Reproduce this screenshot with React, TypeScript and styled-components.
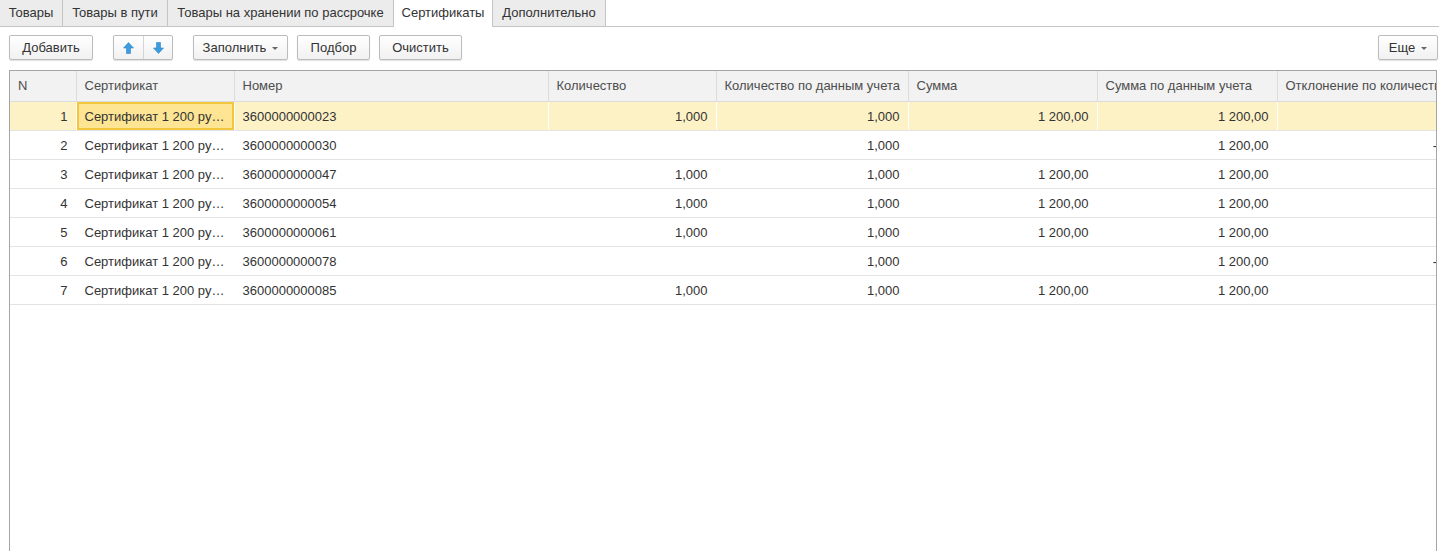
import React from "react";
import styled, { createGlobalStyle } from "styled-components";

const Global = createGlobalStyle`
  html, body { margin: 0; padding: 0; background: #fff; }
  body { font-family: "Liberation Sans", Arial, sans-serif; font-size: 13px; color: #333; overflow: hidden; }
  * { box-sizing: border-box; }
`;

const Page = styled.div`
  width: 1439px;
  height: 551px;
  display: flex;
  flex-direction: column;
  overflow: hidden;
`;

const TabBar = styled.div`
  display: flex;
  height: 27px;
  border-bottom: 1px solid #c4c4c4;
`;

const Tab = styled.div<{ $active?: boolean; $w: number }>`
  width: ${(p) => p.$w}px;
  height: ${(p) => (p.$active ? 27 : 26)}px;
  display: flex;
  align-items: center;
  justify-content: center;
  padding-bottom: 2px;
  background: ${(p) => (p.$active ? "#fff" : "#ececec")};
  border-right: 1px solid #c4c4c4;
  border-left: ${(p) => (p.$active ? "1px solid #c4c4c4" : "none")};
  margin-left: ${(p) => (p.$active ? "-1px" : "0")};
  color: #333;
  font-size: 13px;
  white-space: nowrap;
`;

const Toolbar = styled.div`
  display: flex;
  align-items: center;
  height: 25px;
  margin-top: 8px;
  padding: 0 1px 0 9px;
`;

const Button = styled.div<{ $w: number; $ml?: number }>`
  width: ${(p) => p.$w}px;
  margin-left: ${(p) => p.$ml ?? 0}px;
  height: 25px;
  display: flex;
  align-items: center;
  justify-content: center;
  gap: 6px;
  border: 1px solid #bcbcbc;
  border-radius: 2px;
  background: linear-gradient(#ffffff, #f1f1f1);
  box-shadow: 0 1px 1px rgba(0, 0, 0, 0.12);
  color: #333;
  font-size: 13px;
`;

const ButtonGroup = styled.div<{ $ml: number }>`
  display: flex;
  margin-left: ${(p) => p.$ml}px;
  height: 25px;
  border: 1px solid #bcbcbc;
  border-radius: 2px;
  background: linear-gradient(#ffffff, #f1f1f1);
  box-shadow: 0 1px 1px rgba(0, 0, 0, 0.12);
`;

const GroupPart = styled.div<{ $sep?: boolean }>`
  width: 29px;
  display: flex;
  align-items: center;
  justify-content: center;
  border-left: ${(p) => (p.$sep ? "1px solid #d4d4d4" : "none")};
`;

const Spacer = styled.div`
  flex: 1;
`;

const Caret = styled.span`
  width: 0;
  height: 0;
  border-left: 3px solid transparent;
  border-right: 3px solid transparent;
  border-top: 3px solid #666;
  margin-top: 1px;
`;

const TableWrap = styled.div`
  margin: 10px 2px 0 9px;
  flex: 1;
  border-left: 1px solid #a5a5a5;
  border-top: 1px solid #a5a5a5;
  border-right: 1px solid #a5a5a5;
  overflow: hidden;
`;

const Table = styled.table`
  table-layout: fixed;
  border-collapse: collapse;
  width: 1468px;
`;

const Th = styled.th`
  height: 30px;
  background: #f2f2f2;
  border-right: 1px solid #dcdcdc;
  border-bottom: 1px solid #dcdcdc;
  text-align: left;
  font-weight: normal;
  color: #4d4d4d;
  padding: 7px 8px 0;
  vertical-align: top;
  white-space: nowrap;
  overflow: hidden;
`;

const Tr = styled.tr<{ $sel?: boolean }>`
  background: ${(p) => (p.$sel ? "#fdf2c6" : "#fff")};
`;

const Td = styled.td<{ $right?: boolean; $focus?: boolean }>`
  height: 29px;
  border-bottom: 1px solid #e3e3e3;
  border-right: 1px solid #fff;
  padding: 2px ${(p) => (p.$right ? 8 : 5)}px 0 8px;
  text-align: ${(p) => (p.$right ? "right" : "left")};
  white-space: nowrap;
  overflow: hidden;
  text-overflow: ${(p) => (p.$right ? "clip" : "ellipsis")};
  color: #333;
  ${(p) =>
    p.$focus
      ? `background: #fde593; box-shadow: inset 0 0 0 2px #f4c63d;`
      : ""}
`;

const Arrow = ({ down }: { down?: boolean }) => (
  <svg width="11" height="12" viewBox="0 0 11 12" style={{ transform: down ? "rotate(180deg)" : undefined }}>
    <path d="M5.5 0.5 L10.5 6 L7.5 6 L7.5 11.5 L3.5 11.5 L3.5 6 L0.5 6 Z" fill="#3d9be0" stroke="#2f86cc" strokeWidth="0.6" />
  </svg>
);

const cols = [66, 158, 314, 168, 192, 189, 180, 201];
const headers = [
  "N",
  "Сертификат",
  "Номер",
  "Количество",
  "Количество по данным учета",
  "Сумма",
  "Сумма по данным учета",
  "Отклонение по количеству",
];

type Row = { n: number; num: string; q: string; qa: string; s: string; sa: string; d: string };
const rows: Row[] = [
  { n: 1, num: "3600000000023", q: "1,000", qa: "1,000", s: "1 200,00", sa: "1 200,00", d: "" },
  { n: 2, num: "3600000000030", q: "", qa: "1,000", s: "", sa: "1 200,00", d: "-1,000" },
  { n: 3, num: "3600000000047", q: "1,000", qa: "1,000", s: "1 200,00", sa: "1 200,00", d: "" },
  { n: 4, num: "3600000000054", q: "1,000", qa: "1,000", s: "1 200,00", sa: "1 200,00", d: "" },
  { n: 5, num: "3600000000061", q: "1,000", qa: "1,000", s: "1 200,00", sa: "1 200,00", d: "" },
  { n: 6, num: "3600000000078", q: "", qa: "1,000", s: "", sa: "1 200,00", d: "-1,000" },
  { n: 7, num: "3600000000085", q: "1,000", qa: "1,000", s: "1 200,00", sa: "1 200,00", d: "" },
];

export default function App() {
  return (
    <Page>
      <Global />
      <TabBar>
        <Tab $w={63}>Товары</Tab>
        <Tab $w={105}>Товары в пути</Tab>
        <Tab $w={226}>Товары на хранении по рассрочке</Tab>
        <Tab $w={100} $active>Сертификаты</Tab>
        <Tab $w={113}>Дополнительно</Tab>
      </TabBar>
      <Toolbar>
        <Button $w={84}>Добавить</Button>
        <ButtonGroup $ml={20}>
          <GroupPart><Arrow /></GroupPart>
          <GroupPart $sep><Arrow down /></GroupPart>
        </ButtonGroup>
        <Button $w={95} $ml={20}>
          Заполнить <Caret />
        </Button>
        <Button $w={73} $ml={9}>Подбор</Button>
        <Button $w={83} $ml={9}>Очистить</Button>
        <Spacer />
        <Button $w={60}>
          Еще <Caret />
        </Button>
      </Toolbar>
      <TableWrap>
        <Table>
          <colgroup>
            {cols.map((w, i) => (
              <col key={i} style={{ width: w }} />
            ))}
          </colgroup>
          <thead>
            <tr>
              {headers.map((h) => (
                <Th key={h}>{h}</Th>
              ))}
            </tr>
          </thead>
          <tbody>
            {rows.map((r) => (
              <Tr key={r.n} $sel={r.n === 1}>
                <Td $right>{r.n}</Td>
                <Td $focus={r.n === 1}>Сертификат 1 200 рублей</Td>
                <Td>{r.num}</Td>
                <Td $right>{r.q}</Td>
                <Td $right>{r.qa}</Td>
                <Td $right>{r.s}</Td>
                <Td $right>{r.sa}</Td>
                <Td $right>{r.d}</Td>
              </Tr>
            ))}
          </tbody>
        </Table>
      </TableWrap>
    </Page>
  );
}
